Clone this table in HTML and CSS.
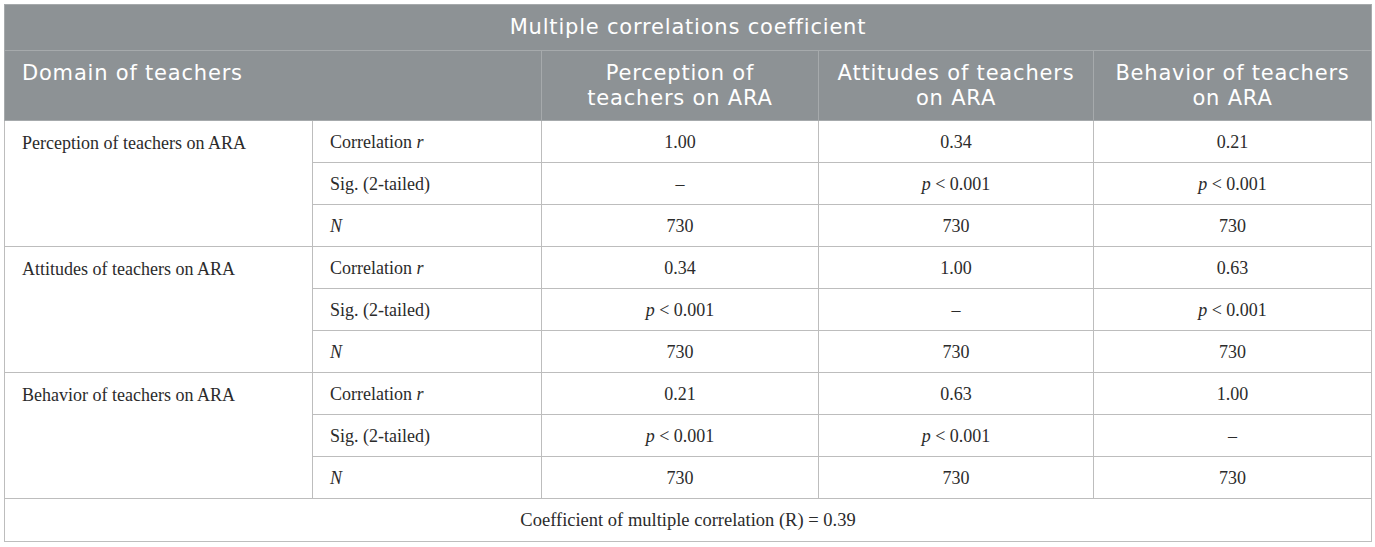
FILE: index.html
```html
<!DOCTYPE html>
<html lang="en">
<head>
    <meta charset="UTF-8">
    <title>Multiple correlations coefficient</title>
    <link rel="stylesheet" href="styles.css">
</head>
<body>
    <table class="corr-table">
        <colgroup>
            <col class="c-domain">
            <col class="c-stat">
            <col class="c-perc">
            <col class="c-att">
            <col class="c-beh">
        </colgroup>
        <thead>
            <tr class="title-row">
                <th colspan="5">Multiple correlations coefficient</th>
            </tr>
            <tr class="head-row">
                <th colspan="2" class="left">Domain of teachers</th>
                <th>Perception of<br>teachers on ARA</th>
                <th>Attitudes of teachers<br>on ARA</th>
                <th>Behavior of teachers<br>on ARA</th>
            </tr>
        </thead>
        <tbody>
            <!-- Perception -->
            <tr>
                <td rowspan="3" class="domain">Perception of teachers on ARA</td>
                <td class="stat">Correlation <i>r</i></td>
                <td>1.00</td>
                <td>0.34</td>
                <td>0.21</td>
            </tr>
            <tr>
                <td class="stat">Sig. (2-tailed)</td>
                <td>–</td>
                <td><i>p</i> &lt; 0.001</td>
                <td><i>p</i> &lt; 0.001</td>
            </tr>
            <tr>
                <td class="stat"><i>N</i></td>
                <td>730</td>
                <td>730</td>
                <td>730</td>
            </tr>

            <!-- Attitudes -->
            <tr>
                <td rowspan="3" class="domain">Attitudes of teachers on ARA</td>
                <td class="stat">Correlation <i>r</i></td>
                <td>0.34</td>
                <td>1.00</td>
                <td>0.63</td>
            </tr>
            <tr>
                <td class="stat">Sig. (2-tailed)</td>
                <td><i>p</i> &lt; 0.001</td>
                <td>–</td>
                <td><i>p</i> &lt; 0.001</td>
            </tr>
            <tr>
                <td class="stat"><i>N</i></td>
                <td>730</td>
                <td>730</td>
                <td>730</td>
            </tr>

            <!-- Behavior -->
            <tr>
                <td rowspan="3" class="domain">Behavior of teachers on ARA</td>
                <td class="stat">Correlation <i>r</i></td>
                <td>0.21</td>
                <td>0.63</td>
                <td>1.00</td>
            </tr>
            <tr>
                <td class="stat">Sig. (2-tailed)</td>
                <td><i>p</i> &lt; 0.001</td>
                <td><i>p</i> &lt; 0.001</td>
                <td>–</td>
            </tr>
            <tr>
                <td class="stat"><i>N</i></td>
                <td>730</td>
                <td>730</td>
                <td>730</td>
            </tr>
        </tbody>
        <tfoot>
            <tr class="foot-row">
                <td colspan="5">Coefficient of multiple correlation (R) = 0.39</td>
            </tr>
        </tfoot>
    </table>
</body>
</html>
```

FILE: styles.css
```css
* {
    margin: 0;
    padding: 0;
    box-sizing: border-box;
}

body {
    background: #ffffff;
    padding: 4px;
    font-family: "Liberation Serif", "Times New Roman", serif;
    color: #2b2b2b;
}

.corr-table {
    width: 1367px;
    border-collapse: collapse;
    table-layout: fixed;
    border: 1px solid #b8b8b8;
}

.c-domain { width: 308px; }
.c-stat { width: 229px; }
.c-perc { width: 277px; }
.c-att { width: 275px; }
.c-beh { width: 278px; }

/* header */
thead th {
    background: #8d9295;
    color: #ffffff;
    font-family: "DejaVu Sans", "Open Sans", sans-serif;
    font-weight: 400;
    font-size: 21px;
    letter-spacing: 0.8px;
    line-height: 25px;
    text-align: center;
    border: 1px solid #a6aaac;
}

.title-row th {
    height: 46px;
    padding: 0 10px;
    vertical-align: middle;
}

.head-row th {
    height: 69px;
    padding: 10px 4px 9px;
    vertical-align: top;
}

.head-row th.left {
    text-align: left;
    padding-left: 17px;
}

/* body */
tbody td {
    height: 42px;
    font-size: 18px;
    line-height: 22px;
    text-align: center;
    border: 1px solid #bdbdbd;
    padding: 0 10px;
    vertical-align: middle;
}

tbody td.stat {
    text-align: left;
    padding-left: 17px;
}

tbody td.domain {
    text-align: left;
    vertical-align: top;
    padding: 11px 10px 0 17px;
}

.foot-row td {
    height: 43px;
    font-size: 18.5px;
    text-align: center;
    border: 1px solid #bdbdbd;
    vertical-align: middle;
}
```
